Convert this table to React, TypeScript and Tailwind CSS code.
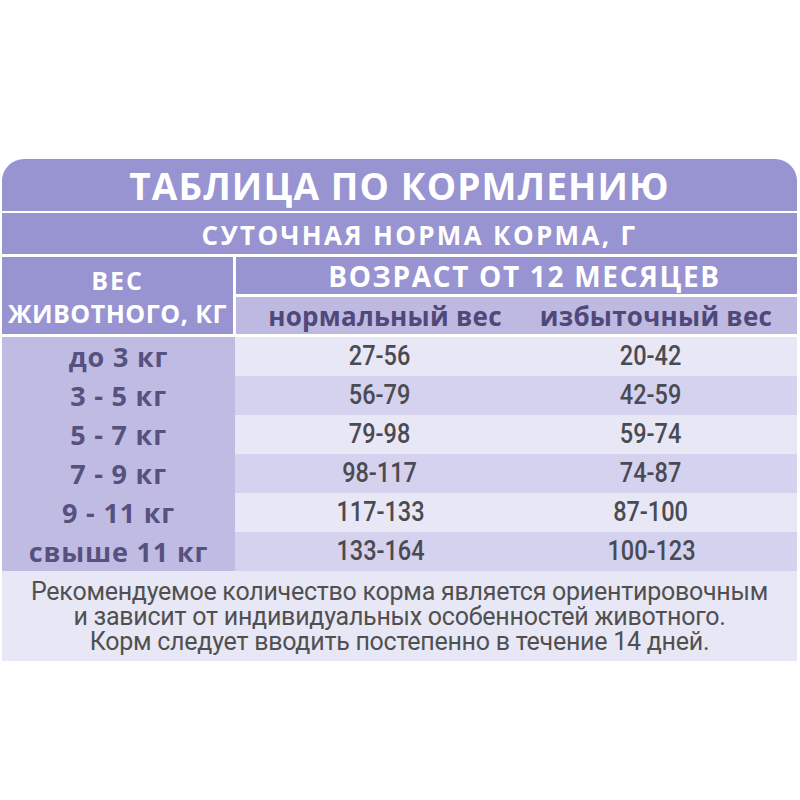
const rows = [
  { w: "до 3 кг", n: "27-56", o: "20-42" },
  { w: "3 - 5 кг", n: "56-79", o: "42-59" },
  { w: "5 - 7 кг", n: "79-98", o: "59-74" },
  { w: "7 - 9 кг", n: "98-117", o: "74-87" },
  { w: "9 - 11 кг", n: "117-133", o: "87-100" },
  { w: "свыше 11 кг", n: "133-164", o: "100-123" },
];

const head = "font-['Open_Sans',sans-serif] font-bold text-white leading-none whitespace-nowrap";
const num = "inline-block scale-x-[0.84] font-['Roboto',sans-serif] font-medium text-[28px] leading-none text-[#4a4a52]";

export default function App() {
  return (
    <div className="w-[800px] h-[800px] bg-white pt-[159px] pl-[2px]">
      <div className="w-[795px] rounded-t-[22px] overflow-hidden flex flex-col">
        {/* title */}
        <div className={`h-[52px] bg-[#9893d1] flex items-center justify-center ${head} text-[37px] tracking-[0.03em]`}>
          ТАБЛИЦА ПО КОРМЛЕНИЮ
        </div>
        <div className="h-[2px]" />
        <div className={`h-[41px] bg-[#9893d1] flex items-center justify-center pt-[3px] pl-[40px] ${head} text-[26px] tracking-[0.09em]`}>
          СУТОЧНАЯ НОРМА КОРМА, Г
        </div>
        <div className="h-[3px]" />

        {/* header */}
        <div className="flex gap-[3px]">
          <div className={`w-[231px] h-[77px] bg-[#9893d1] flex flex-col items-center justify-center gap-[8px] pt-[2px] ${head} text-[25px] tracking-[0.02em]`}>
            <span className="tracking-[0.08em]">ВЕС</span>
            <span>ЖИВОТНОГО, КГ</span>
          </div>
          <div className="flex-1 flex flex-col gap-[3px]">
            <div className={`h-[37px] bg-[#9893d1] flex items-center justify-center pl-[16px] ${head} text-[28px] tracking-[0.06em]`}>
              ВОЗРАСТ ОТ 12 МЕСЯЦЕВ
            </div>
            <div className="h-[37px] bg-[#bdb9e1] grid grid-cols-[298px_1fr] items-center font-['Open_Sans',sans-serif] font-bold text-[26px] leading-none whitespace-nowrap text-[#4f4878] tracking-[0.01em]">
              <span className="text-center">нормальный вес</span>
              <span className="text-center pr-[19px]">избыточный вес</span>
            </div>
          </div>
        </div>
        <div className="h-[3px]" />

        {/* body */}
        <div className="flex">
          <div className="w-[233px] bg-[#bfbbe2] flex flex-col">
            {rows.map((r) => (
              <div
                key={r.w}
                className="h-[39px] flex items-center justify-center font-['Open_Sans',sans-serif] font-bold text-[27px] leading-none whitespace-nowrap text-[#56517f] tracking-[0.03em]"
              >
                {r.w}
              </div>
            ))}
          </div>
          <div className="flex-1 flex flex-col">
            {rows.map((r, i) => (
              <div
                key={r.n}
                className={`h-[39px] grid grid-cols-[290px_1fr] items-center ${i % 2 === 0 ? "bg-[#e8e7f5]" : "bg-[#d4d2ee]"}`}
              >
                <span className="text-center">
                  <span className={num}>{r.n}</span>
                </span>
                <span className="text-center pr-[20px]">
                  <span className={num}>{r.o}</span>
                </span>
              </div>
            ))}
          </div>
        </div>

        {/* footer */}
        <div className="h-[90px] bg-[#e8e7f5] flex flex-col items-center justify-center font-['Roboto',sans-serif] text-[25px] leading-[25px] text-[#505050] tracking-[-0.01em]">
          <span>Рекомендуемое количество корма является ориентировочным</span>
          <span>и зависит от индивидуальных особенностей животного.</span>
          <span>Корм следует вводить постепенно в течение 14 дней.</span>
        </div>
      </div>
    </div>
  );
}
